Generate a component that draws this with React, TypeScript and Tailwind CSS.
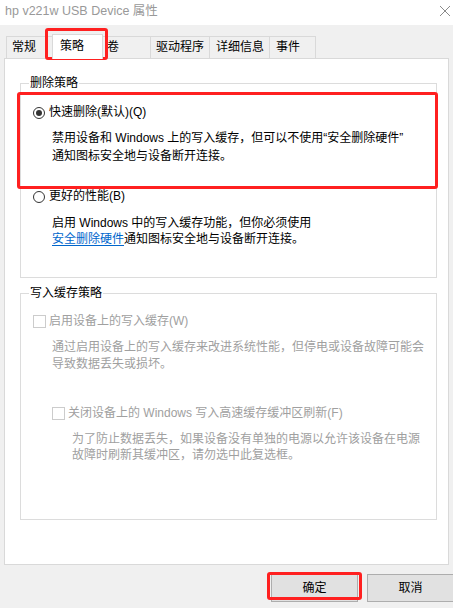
import React from 'react';

const FONT = '"Liberation Sans", "Noto Sans CJK SC", sans-serif';

type Tab = { label: string; width: string; pad: string; border: string; selected?: boolean };

const tabs: Tab[] = [
  { label: '常规', width: 'w-[46px]', pad: 'pl-[5px]', border: 'border-l border-t' },
  { label: '策略', width: 'w-[51px]', pad: 'pl-[7px]', border: 'border-l border-t border-r', selected: true },
  { label: '卷', width: 'w-[47px]', pad: 'pl-[4px]', border: 'border-t' },
  { label: '驱动程序', width: 'w-[59px]', pad: 'pl-[5px]', border: 'border-l border-t' },
  { label: '详细信息', width: 'w-[60px]', pad: 'pl-[6px]', border: 'border-l border-t' },
  { label: '事件', width: 'w-[47px]', pad: 'pl-[6px]', border: 'border-l border-t border-r' },
];

// 红色标注框
const Mark = ({ className }: { className: string }) => (
  <div className={`pointer-events-none absolute rounded-[3px] border-[3px] border-[#ff2020] ${className}`} />
);

const Radio = ({ checked }: { checked?: boolean }) => (
  <span className="flex h-[12px] w-[12px] shrink-0 items-center justify-center rounded-full border border-[#333333] bg-white">
    {checked && <span className="h-[6px] w-[6px] rounded-full bg-[#333333]" />}
  </span>
);

const CheckBox = () => (
  <span className="h-[13px] w-[13px] shrink-0 border border-[#cccccc] bg-white" />
);

export default function App() {
  return (
    <div
      className="relative flex h-[608px] w-[453px] flex-col overflow-hidden bg-[#f0f0f0] text-[12px] text-black"
      style={{ fontFamily: FONT }}
    >
      {/* 标题栏 */}
      <div className="flex h-[25px] items-center justify-between bg-white pl-[5px] pr-[2px]">
        <span className="mb-[3px] text-[12.5px] leading-[16px] text-[#999999]">hp v221w USB Device 属性</span>
        <svg width="12" height="12" viewBox="0 0 12 12" className="mb-[3px]">
          <path d="M1 1 L11 11 M11 1 L1 11" stroke="#8a8a8a" strokeWidth="1" fill="none" />
        </svg>
      </div>

      {/* 选项卡 */}
      <div className="mt-[11px] flex h-[22px] items-end pl-[6px]">
        {tabs.map((t) =>
          t.selected ? (
            <div
              key={t.label}
              className={`relative z-10 -mb-px flex h-[25px] items-start border-[#d9d9d9] bg-white pt-[3px] leading-[17px] ${t.width} ${t.pad} ${t.border}`}
            >
              {t.label}
            </div>
          ) : (
            <div
              key={t.label}
              className={`flex h-[22px] items-center border-[#d9d9d9] bg-[#f0f0f0] leading-[17px] ${t.width} ${t.pad} ${t.border}`}
            >
              {t.label}
            </div>
          )
        )}
      </div>

      {/* 内容面板 */}
      <div className="mx-[4px] h-[507px] w-[445px] border border-[#d9d9d9] bg-white">
        <fieldset className="mt-[17px] ml-[15px] h-[202px] w-[417px] border border-[#dcdcdc] px-0">
          <legend className="ml-[8px] px-px leading-[14px]">删除策略</legend>

          <div className="mt-[14px] flex h-[17px] items-center gap-[4px] pl-[12px] leading-[17px]">
            <Radio checked />
            <span>快速删除(默认)(Q)</span>
          </div>
          <div className="mt-[8px] pl-[31px] leading-[18px]">
            <div>禁用设备和 Windows 上的写入缓存，但可以不使用“安全删除硬件”</div>
            <div>通知图标安全地与设备断开连接。</div>
          </div>

          <div className="mt-[23px] flex h-[17px] items-center gap-[4px] pl-[12px] leading-[17px]">
            <Radio />
            <span>更好的性能(B)</span>
          </div>
          <div className="mt-[10px] pl-[31px] leading-[16px]">
            <div>启用 Windows 中的写入缓存功能，但你必须使用</div>
            <div>
              <span className="text-[#0066cc] underline underline-offset-2">安全删除硬件</span>通知图标安全地与设备断开连接。
            </div>
          </div>
        </fieldset>

        <fieldset className="mt-[8px] ml-[15px] h-[234px] w-[417px] border border-[#dcdcdc] px-0">
          <legend className="ml-[8px] px-px leading-[14px]">写入缓存策略</legend>

          <div className="mt-[13px] flex h-[17px] items-center gap-[3px] pl-[12px] leading-[17px] text-[#a0a0a0]">
            <CheckBox />
            <span>启用设备上的写入缓存(W)</span>
          </div>
          <div className="mt-[9px] pl-[31px] leading-[17px] text-[#a0a0a0]">
            <div>通过启用设备上的写入缓存来改进系统性能，但停电或设备故障可能会</div>
            <div>导致数据丢失或损坏。</div>
          </div>

          <div className="mt-[32px] flex h-[17px] items-center gap-[3px] pl-[31px] leading-[17px] text-[#a0a0a0]">
            <CheckBox />
            <span>关闭设备上的 Windows 写入高速缓存缓冲区刷新(F)</span>
          </div>
          <div className="mt-[9px] pl-[51px] leading-[16px] text-[#a0a0a0]">
            <div>为了防止数据丢失，如果设备没有单独的电源以允许该设备在电源</div>
            <div>故障时刷新其缓冲区，请勿选中此复选框。</div>
          </div>
        </fieldset>
      </div>

      {/* 按钮 */}
      <div className="mt-[9px] flex justify-end gap-[9px] -mr-px">
        <button className="h-[28px] w-[87px] border border-[#adadad] bg-[#e1e1e1] leading-[17px]">确定</button>
        <button className="h-[28px] w-[87px] border border-[#adadad] bg-[#e1e1e1] leading-[17px]">取消</button>
      </div>

      <Mark className="left-[45px] top-[28px] h-[32px] w-[63px]" />
      <Mark className="left-[17px] top-[92px] h-[97px] w-[421px]" />
      <Mark className="left-[267px] top-[572px] h-[28px] w-[95px]" />
    </div>
  );
}
